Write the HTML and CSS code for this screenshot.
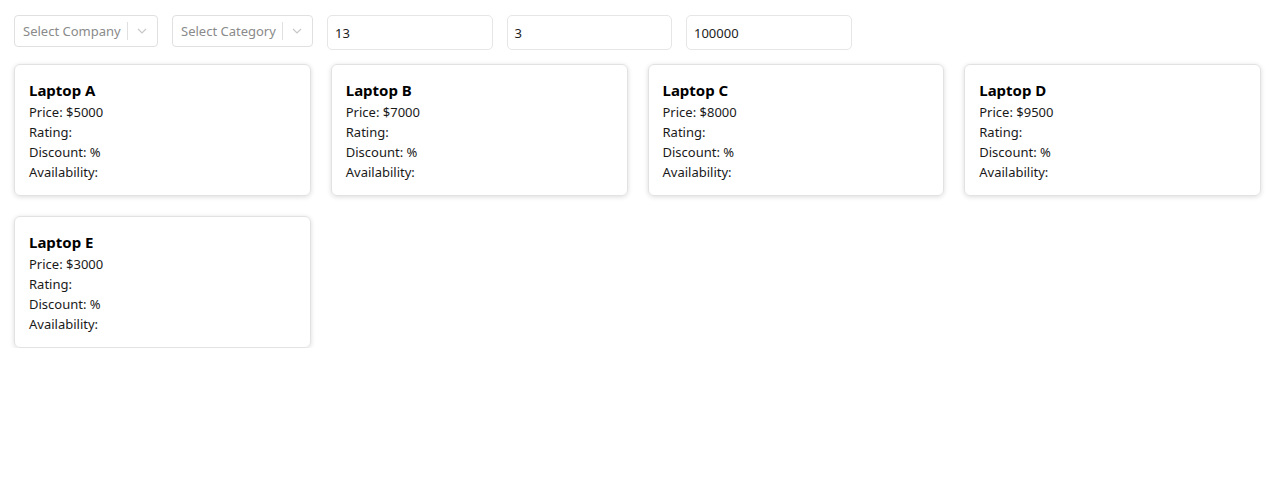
FILE: index.html
```html
<!DOCTYPE html>
<html>
<head>
<meta charset="utf-8">
<link rel="stylesheet" href="styles.css">
</head>
<body>
<div class="page">
  <div class="filters">
    <div class="select s1">
      <span class="placeholder">Select Company</span>
      <span class="sep"></span>
      <svg class="chev" width="10" height="6" viewBox="0 0 10 6"><path d="M1 1l4 4 4-4" fill="none" stroke="#c8c8c8" stroke-width="1.2"/></svg>
    </div>
    <div class="select s2">
      <span class="placeholder">Select Category</span>
      <span class="sep"></span>
      <svg class="chev" width="10" height="6" viewBox="0 0 10 6"><path d="M1 1l4 4 4-4" fill="none" stroke="#c8c8c8" stroke-width="1.2"/></svg>
    </div>
    <div class="input">13</div>
    <div class="input">3</div>
    <div class="input">100000</div>
  </div>
  <div class="grid">
    <div class="card"><div class="title">Laptop A</div><div>Price: $5000</div><div>Rating: </div><div>Discount: %</div><div>Availability: </div></div>
    <div class="card"><div class="title">Laptop B</div><div>Price: $7000</div><div>Rating: </div><div>Discount: %</div><div>Availability: </div></div>
    <div class="card"><div class="title">Laptop C</div><div>Price: $8000</div><div>Rating: </div><div>Discount: %</div><div>Availability: </div></div>
    <div class="card"><div class="title">Laptop D</div><div>Price: $9500</div><div>Rating: </div><div>Discount: %</div><div>Availability: </div></div>
    <div class="card"><div class="title">Laptop E</div><div>Price: $3000</div><div>Rating: </div><div>Discount: %</div><div>Availability: </div></div>
  </div>
</div>
</body>
</html>
```
FILE: styles.css
```css
* { box-sizing: border-box; }
body {
  margin: 0;
  background: #fff;
  font-family: "Noto Sans", "Open Sans", sans-serif;
  color: #111;
}
.page {
  padding: 15px 19px 0 14px;
}
.filters {
  display: flex;
  align-items: flex-start;
  gap: 14px;
}
.select {
  height: 32px;
  border: 1px solid #e0e0e0;
  border-radius: 4px;
  display: flex;
  align-items: center;
  padding-left: 8px;
  font-size: 13px;
  color: #8a8a8a;
}
.s1 { width: 144px; }
.s2 { width: 141px; }
.placeholder { flex: 1; white-space: nowrap; }
.sep {
  width: 1px;
  height: 18px;
  background: #e0e0e0;
  margin: 0 9px 0 6px;
}
.chev { margin-right: 10px; }
.input {
  width: 165.5px;
  height: 35px;
  border: 1px solid #e6e6e6;
  border-radius: 5px;
  display: flex;
  align-items: center;
  padding-left: 7px;
  font-size: 13px;
  color: #222;
}
.grid {
  margin-top: 14px;
  display: grid;
  grid-template-columns: repeat(4, 1fr);
  column-gap: 20px;
  row-gap: 20px;
}
.card {
  height: 132px;
  border: 1px solid #e2e2e2;
  border-radius: 6px;
  box-shadow: 0 1px 5px rgba(0,0,0,0.14);
  padding: 14px 14px;
  font-size: 13px;
  line-height: 20px;
  color: #1a1a1a;
}
.title {
  font-weight: 700;
  font-size: 15px;
  color: #000;
  line-height: 22px;
  margin-bottom: 1px;
}
```
